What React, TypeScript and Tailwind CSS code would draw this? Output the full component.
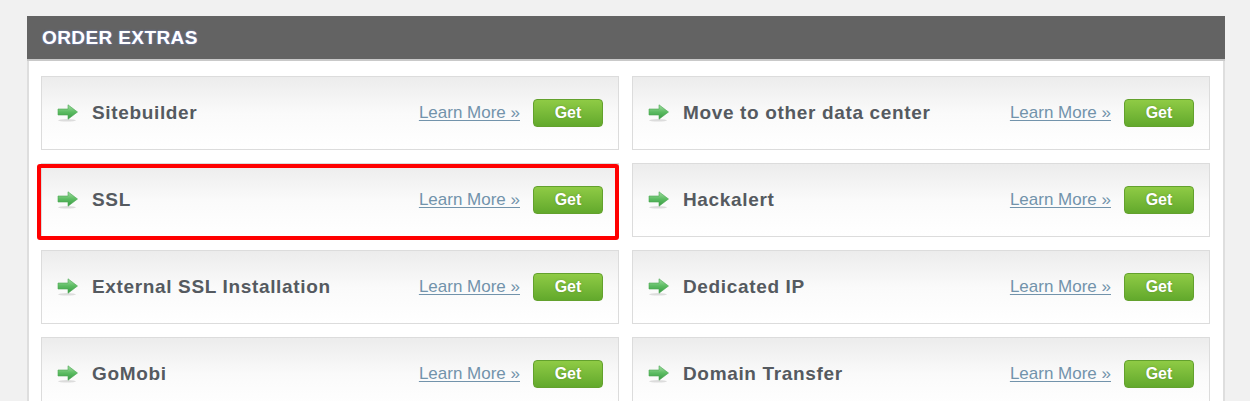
import React from "react";

const items: [string, string][] = [
  ["Sitebuilder", "Move to other data center"],
  ["SSL", "Hackalert"],
  ["External SSL Installation", "Dedicated IP"],
  ["GoMobi", "Domain Transfer"],
];

function Arrow() {
  return (
    <svg width="22" height="18" viewBox="0 0 22 18" className="shrink-0">
      <defs>
        <linearGradient id="ag" x1="0" y1="0" x2="0" y2="1">
          <stop offset="0" stopColor="#a2dca2" />
          <stop offset="0.5" stopColor="#5cbc62" />
          <stop offset="1" stopColor="#3a9a45" />
        </linearGradient>
      </defs>
      <ellipse cx="10" cy="16.3" rx="9" ry="1.3" fill="#000" opacity="0.12" />
      <path d="M1 5 H11 V0.8 L20.5 8 L11 15.2 V11 H1 Z" fill="url(#ag)" stroke="#4aa852" strokeWidth="0.6" strokeLinejoin="round" />
    </svg>
  );
}

function Card({ name, highlight }: { name: string; highlight?: boolean }) {
  return (
    <div className="relative h-[74px] border border-[#dcdcdc] bg-gradient-to-b from-[#ececec] via-[#fafafa] to-white flex items-center pl-[15px] pr-[15px]">
      <Arrow />
      <span
        className="ml-[13px] text-[19px] font-bold tracking-[0.65px] text-[#555a60]"
        style={{ fontFamily: '"Liberation Sans", Arial, sans-serif' }}
      >
        {name}
      </span>
      <div className="ml-auto flex items-center gap-[13px]">
        <a
          className="text-[17px] underline text-[#7293ab] underline-offset-2"
          style={{ fontFamily: '"Liberation Sans", Arial, sans-serif' }}
        >
          Learn More »
        </a>
        <button
          className="w-[70px] h-[28px] rounded-[4px] border border-[#63a12d] bg-gradient-to-b from-[#8fcb45] to-[#62a92c] text-white font-bold text-[16px]"
          style={{ fontFamily: '"Liberation Sans", Arial, sans-serif', textShadow: "0 0 2px rgba(80,120,40,0.6)" }}
        >
          Get
        </button>
      </div>
      {highlight && (
        <div className="absolute left-[-5px] top-[0px] w-[582px] h-[76px] border-[4px] border-[#ff0000] rounded-[3px] pointer-events-none" />
      )}
    </div>
  );
}

export default function App() {
  return (
    <div className="w-[1250px] h-[401px] overflow-hidden bg-[#f1f1f1] pl-[27px] pt-[16px]">
      <div className="w-[1198px] h-[400px] bg-white border-x-2 border-[#dedede]">
        <div className="h-[45px] bg-[#636363] border-b-2 border-[#c9c9c9] flex items-center pl-[15px] -mx-[2px] w-[1198px]">
          <span
            className="text-white font-bold text-[19px] tracking-[0.4px] pt-[1px]"
            style={{ fontFamily: '"Liberation Sans", Arial, sans-serif', textShadow: "0 0 2px rgba(120,150,255,0.8)" }}
          >
            ORDER EXTRAS
          </span>
        </div>
        <div className="pl-[12px] pt-[15px] grid grid-cols-[578px_578px] gap-[13px]">
          {items.map(([a, b], i) => (
            <React.Fragment key={i}>
              <Card name={a} highlight={i === 1} />
              <Card name={b} />
            </React.Fragment>
          ))}
        </div>
      </div>
    </div>
  );
}
